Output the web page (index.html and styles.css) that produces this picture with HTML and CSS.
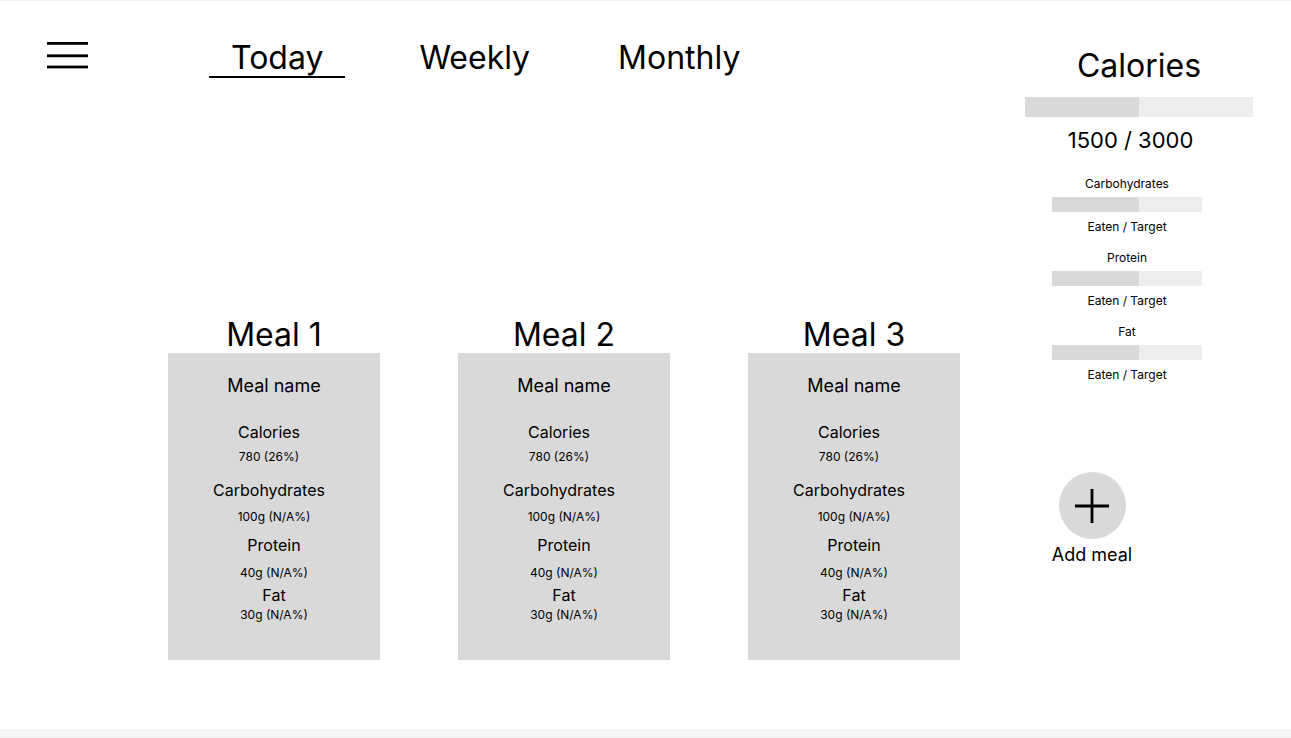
FILE: index.html
```html
<!DOCTYPE html>
<html lang="en">
<head>
    <meta charset="UTF-8">
    <meta name="viewport" content="width=device-width, initial-scale=1.0">
    <title>Meal tracker</title>
    <link rel="stylesheet" href="styles.css">
</head>
<body>
    <div class="page">
        <div class="frame">
            <main class="main">
                <header class="topbar">
                    <button class="menu" aria-label="Menu">
                        <svg width="41" height="27" viewBox="0 0 41 27">
                            <rect x="0" y="0" width="41" height="2.8" fill="#000"/>
                            <rect x="0" y="12.4" width="41" height="2.8" fill="#000"/>
                            <rect x="0" y="23.6" width="41" height="2.8" fill="#000"/>
                        </svg>
                    </button>
                    <nav class="tabs">
                        <a class="tab active">Today</a>
                        <a class="tab weekly">Weekly</a>
                        <a class="tab monthly">Monthly</a>
                    </nav>
                </header>

                <section class="meals">
                    <div class="meal">
                        <h2>Meal 1</h2>
                        <div class="card">
                            <p class="name">Meal name</p>
                            <p class="label cal off">Calories</p>
                            <p class="value v-cal off">780 (26%)</p>
                            <p class="label carb off">Carbohydrates</p>
                            <p class="value v-carb">100g (N/A%)</p>
                            <p class="label prot">Protein</p>
                            <p class="value v-prot">40g (N/A%)</p>
                            <p class="label fat">Fat</p>
                            <p class="value v-fat">30g (N/A%)</p>
                        </div>
                    </div>
                    <div class="meal">
                        <h2>Meal 2</h2>
                        <div class="card">
                            <p class="name">Meal name</p>
                            <p class="label cal off">Calories</p>
                            <p class="value v-cal off">780 (26%)</p>
                            <p class="label carb off">Carbohydrates</p>
                            <p class="value v-carb">100g (N/A%)</p>
                            <p class="label prot">Protein</p>
                            <p class="value v-prot">40g (N/A%)</p>
                            <p class="label fat">Fat</p>
                            <p class="value v-fat">30g (N/A%)</p>
                        </div>
                    </div>
                    <div class="meal">
                        <h2>Meal 3</h2>
                        <div class="card">
                            <p class="name">Meal name</p>
                            <p class="label cal off">Calories</p>
                            <p class="value v-cal off">780 (26%)</p>
                            <p class="label carb off">Carbohydrates</p>
                            <p class="value v-carb">100g (N/A%)</p>
                            <p class="label prot">Protein</p>
                            <p class="value v-prot">40g (N/A%)</p>
                            <p class="label fat">Fat</p>
                            <p class="value v-fat">30g (N/A%)</p>
                        </div>
                    </div>
                </section>
            </main>

            <aside class="summary">
                <h2 class="cal-title">Calories</h2>
                <div class="bar big"><div class="fill" style="width: 50%"></div></div>
                <p class="cal-count">1500 / 3000</p>

                <div class="macros">
                    <div class="macro">
                        <p class="macro-name">Carbohydrates</p>
                        <div class="bar small"><div class="fill" style="width: 58%"></div></div>
                        <p class="macro-eaten">Eaten / Target</p>
                    </div>
                    <div class="macro">
                        <p class="macro-name">Protein</p>
                        <div class="bar small"><div class="fill" style="width: 58%"></div></div>
                        <p class="macro-eaten">Eaten / Target</p>
                    </div>
                    <div class="macro">
                        <p class="macro-name">Fat</p>
                        <div class="bar small"><div class="fill" style="width: 58%"></div></div>
                        <p class="macro-eaten">Eaten / Target</p>
                    </div>
                </div>

                <div class="add">
                    <button class="add-btn" aria-label="Add meal">
                        <svg width="34" height="34" viewBox="0 0 34 34">
                            <path d="M17 0 V34 M0 17 H34" stroke="#000" stroke-width="2.8" fill="none"/>
                        </svg>
                    </button>
                    <p class="add-text">Add meal</p>
                </div>
            </aside>
        </div>
        <footer class="footer"></footer>
    </div>
</body>
</html>
```

FILE: styles.css
```css
*{
    margin: 0;
    padding: 0;
    box-sizing: border-box;
}
body{
    font-family: "Inter", "Liberation Sans", sans-serif;
    color: #000;
    background: #fff;
}
.page{
    height: 738px;
    display: flex;
    flex-direction: column;
    border-top: 1px solid #f0f0f0;
    overflow: hidden;
}
.frame{
    flex: 1;
    display: flex;
}
.footer{
    height: 9px;
    background-color: #f4f4f4;
}

/* left side */
.main{
    width: 1025px;
    display: flex;
    flex-direction: column;
}
.topbar{
    display: flex;
    align-items: flex-start;
    padding: 40px 0 0 47px;
}
.menu{
    border: 0;
    background: none;
    margin-top: 1px;
    display: flex;
}
.tabs{
    display: flex;
    align-items: flex-start;
    margin-left: 121px;
    padding-top: 1px;
}
.tab{
    font-size: 32px;
    line-height: 32px;
    padding-bottom: 2px;
    border-bottom: 2px solid transparent;
    cursor: pointer;
}
.tab.active{
    padding: 0 22px 2px 22px;
    border-bottom-color: #000;
}
.tab.weekly{
    margin-left: 74px;
}
.tab.monthly{
    margin-left: 88px;
}

.meals{
    display: flex;
    gap: 78px;
    padding-left: 168px;
    margin-top: 241px;
}
.meal{
    width: 212px;
}
.meal h2{
    font-size: 32px;
    line-height: 32px;
    font-weight: 400;
    text-align: center;
    margin-bottom: 2px;
}
.card{
    height: 307px;
    background-color: #d9d9d9;
    display: flex;
    flex-direction: column;
    align-items: center;
    padding-top: 24px;
}
.card .name{
    font-size: 18px;
    line-height: 18px;
}
.card .label{
    font-size: 16px;
    line-height: 16px;
}
.card .value{
    font-size: 12px;
    line-height: 12px;
}
.card .off{
    padding-right: 10px;
}
.card .cal{ margin-top: 29px; }
.card .v-cal{ margin-top: 11px; }
.card .carb{ margin-top: 19px; }
.card .v-carb{ margin-top: 13px; }
.card .prot{ margin-top: 14px; }
.card .v-prot{ margin-top: 14px; }
.card .fat{ margin-top: 8px; }
.card .v-fat{ margin-top: 6px; }

/* right side */
.summary{
    width: 228px;
    padding-top: 49px;
    display: flex;
    flex-direction: column;
}
.cal-title{
    font-size: 32px;
    line-height: 32px;
    font-weight: 400;
    text-align: center;
}
.bar{
    background-color: #ededed;
    display: flex;
}
.bar .fill{
    background-color: #d9d9d9;
}
.bar.big{
    height: 20px;
    margin-top: 15px;
}
.cal-count{
    font-size: 22px;
    line-height: 22px;
    text-align: center;
    padding-right: 17px;
    margin-top: 12px;
}
.macros{
    padding-right: 24px;
    margin-top: 27px;
    display: flex;
    flex-direction: column;
    align-items: center;
    gap: 19px;
}
.macro{
    display: flex;
    flex-direction: column;
    align-items: center;
    font-size: 12px;
    line-height: 12px;
}
.bar.small{
    width: 150px;
    height: 15px;
    margin-top: 7px;
}
.macro-eaten{
    margin-top: 9px;
}
.add{
    width: 134px;
    margin-top: 91px;
    display: flex;
    flex-direction: column;
    align-items: center;
}
.add-btn{
    width: 67px;
    height: 67px;
    border-radius: 50%;
    border: 0;
    background-color: #d9d9d9;
    display: flex;
    align-items: center;
    justify-content: center;
    cursor: pointer;
}
.add-text{
    font-size: 18px;
    line-height: 18px;
    margin-top: 7px;
}
```
